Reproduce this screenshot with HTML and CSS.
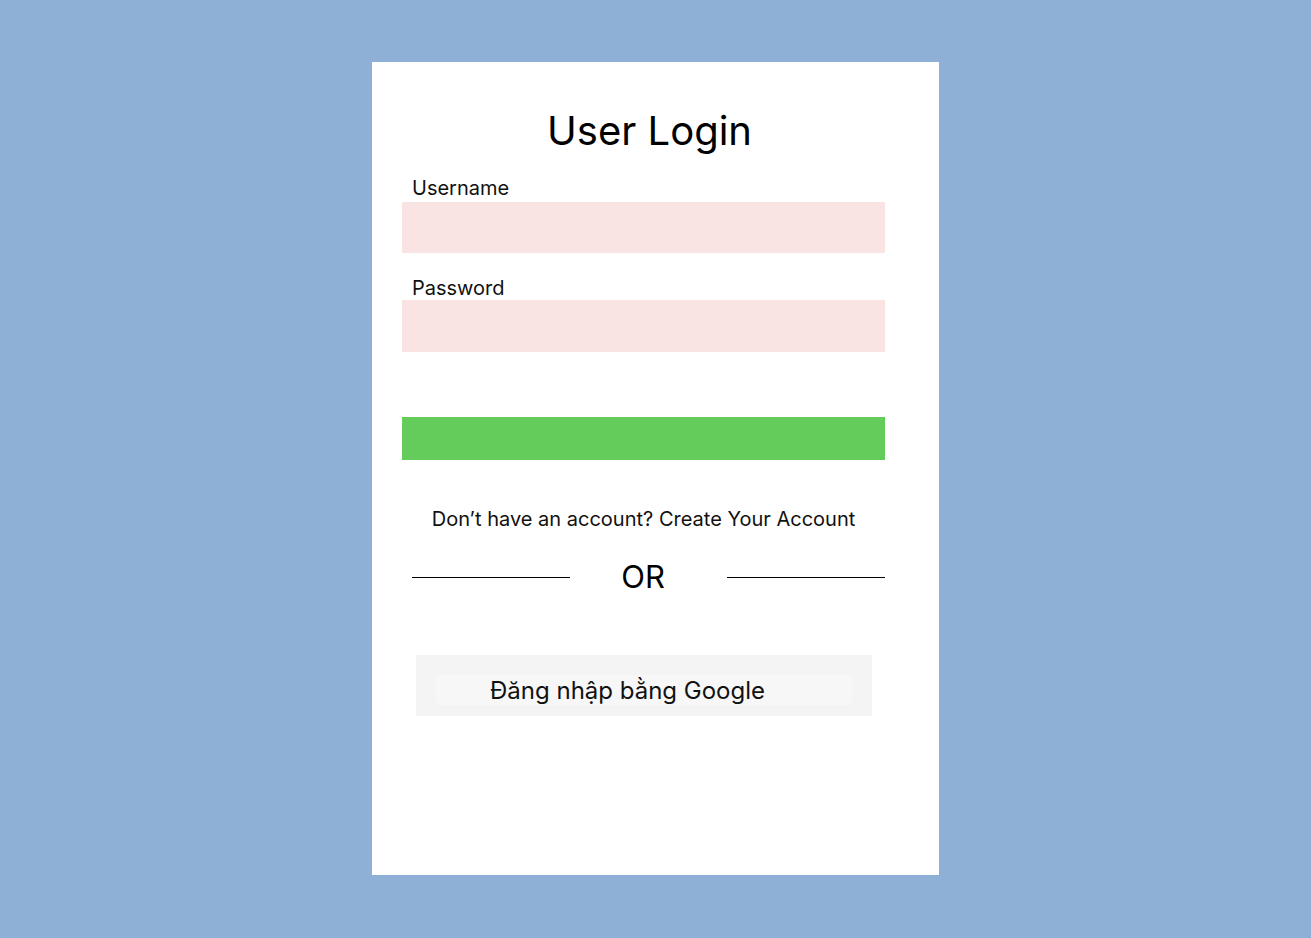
FILE: index.html
```html
<!DOCTYPE html>
<html lang="vi">
    <head>
        <meta charset="UTF-8" />
        <meta name="viewport" content="width=device-width, initial-scale=1.0" />
        <title>User Login</title>
        <link rel="stylesheet" href="styles.css">
    </head>
    <body>
        <div id="container">
            <div class="login-card">
                <h1>User Login</h1>
                <form class="login-form" onsubmit="return false;">
                    <label for="username">Username</label>
                    <input type="text" id="username" class="field" />
                    <label for="password" class="pw-label">Password</label>
                    <input type="password" id="password" class="field" />
                    <button type="submit" class="btn-login"></button>
                </form>
                <p class="signup">Don’t have an account? Create Your Account</p>
                <div class="divider">
                    <span class="line"></span>
                    <span class="or">OR</span>
                    <span class="line"></span>
                </div>
                <div class="google-wrap">
                    <div class="google-btn">Đăng nhập bằng Google</div>
                </div>
            </div>
        </div>
    </body>
</html>
```

FILE: styles.css
```css
body {
    font-family: Inter, "Noto Sans", Arial, sans-serif;
    background-color: #8fb0d6;
    margin: 0;
    padding: 0;
}
#container {
    width: 100%;
    padding-top: 62px;
}
.login-card {
    width: 567px;
    height: 813px;
    box-sizing: border-box;
    margin-left: 372px;
    background-color: #fff;
    padding: 0 54px 0 30px;
}

h1 {
    margin: 0;
    padding-top: 43px;
    padding-left: 12px;
    font-size: 40px;
    font-weight: 400;
    line-height: 52px;
    color: #000;
    text-align: center;
}
.login-form {
    display: flex;
    flex-direction: column;
    margin-top: 19px;
}
label {
    font-size: 20px;
    line-height: 24px;
    margin-left: 10px;
    margin-bottom: 2px;
    color: #111;
}
.pw-label {
    margin-top: 23px;
    margin-bottom: 0;
}
.field {
    height: 51px;
    border: none;
    outline: none;
    padding: 0 10px;
    background-color: #f9e3e3;
}
#password {
    height: 52px;
}
.btn-login {
    height: 43px;
    margin-top: 65px;
    border: none;
    background-color: #63cc5a;
    cursor: pointer;
}

.signup {
    margin: 46px 0 0 0;
    font-size: 20px;
    line-height: 26px;
    text-align: center;
    color: #111;
}
.divider {
    display: flex;
    align-items: center;
    margin-top: 26px;
    padding-left: 10px;
}
.line {
    flex: 1;
    height: 1px;
    background-color: #000;
}
.or {
    width: 157px;
    box-sizing: border-box;
    padding-right: 11px;
    text-align: center;
    font-size: 31px;
    line-height: 38px;
}
.google-wrap {
    width: 456px;
    height: 61px;
    box-sizing: border-box;
    margin: 59px 0 0 14px;
    padding: 20px;
    background-color: #f4f4f4;
}
.google-btn {
    height: 30px;
    background-color: #f7f7f7;
    border-radius: 4px;
    padding-left: 54px;
    font-size: 24px;
    line-height: 32px;
    color: #111;
}
```
